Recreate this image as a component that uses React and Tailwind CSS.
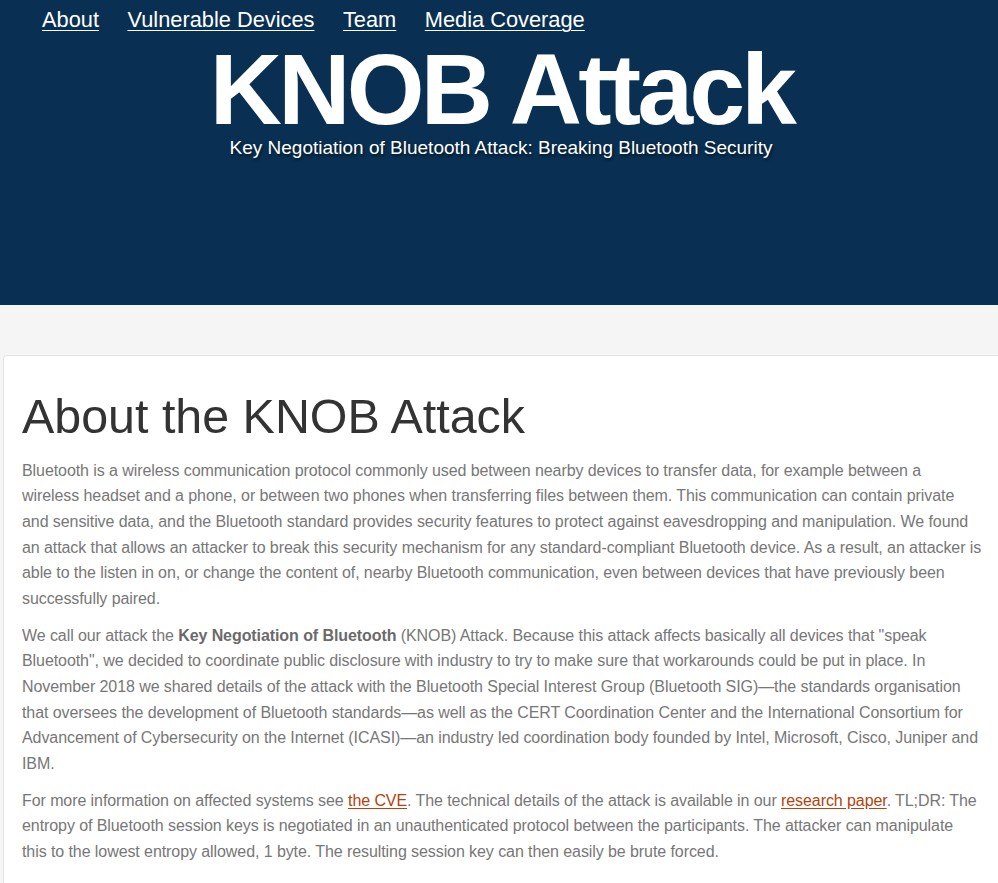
const link = "text-[#b5420c] underline underline-offset-[2px]";

export default function App() {
  return (
    <div className="min-h-screen bg-[#f5f5f5] overflow-hidden font-['Liberation_Sans',Arial,sans-serif]">
      <header className="h-[305px] bg-[#093052] text-white">
        <nav className="flex gap-[28.5px] pl-[42px] pt-[7px] text-[21.8px] leading-[26px]">
          <a href="#about" className="underline underline-offset-[3px] decoration-1">About</a>
          <a href="#devices" className="underline underline-offset-[3px] decoration-1">Vulnerable Devices</a>
          <a href="#team" className="underline underline-offset-[3px] decoration-1">Team</a>
          <a href="#media" className="underline underline-offset-[3px] decoration-1">Media Coverage</a>
        </nav>
        <div className="mt-[11px] text-center">
          <h1 className="pl-[5px] text-[100px] leading-[90px] font-bold tracking-[-3.7px]">KNOB Attack</h1>
          <p className="mt-[2px] pl-[4px] text-[19px] leading-[23px] [text-shadow:1px_2px_3px_rgba(0,0,0,0.6)]">
            Key Negotiation of Bluetooth Attack: Breaking Bluetooth Security
          </p>
        </div>
      </header>
      <div className="h-[50px]" />
      <main className="ml-[3px] w-[1010px] rounded-[4px] border border-[#e3e3e3] bg-white pl-[18px] pt-[34px] pb-[20px]">
        <div className="w-[975px]">
          <h2 className="text-[48.4px] leading-[52.8px] text-[#333]">About the KNOB Attack</h2>
          <div className="mt-[15px] text-[16px] leading-[25.6px] tracking-[-0.08px] text-[#777]">
            <p className="mb-[11.4px]">
              Bluetooth is a wireless communication protocol commonly used between nearby devices to transfer data, for example between a<br />
              wireless headset and a phone, or between two phones when transferring files between them. This communication can contain private<br />
              and sensitive data, and the Bluetooth standard provides security features to protect against eavesdropping and manipulation. We found<br />
              an attack that allows an attacker to break this security mechanism for any standard-compliant Bluetooth device. As a result, an attacker is<br />
              able to the listen in on, or change the content of, nearby Bluetooth communication, even between devices that have previously been<br />
              successfully paired.
            </p>
            <p className="mb-[11.4px]">
              We call our attack the <strong className="font-bold text-[#6a6a6a]">Key Negotiation of Bluetooth</strong> (KNOB) Attack. Because this attack affects basically all devices that "speak<br />
              Bluetooth", we decided to coordinate public disclosure with industry to try to make sure that workarounds could be put in place. In<br />
              November 2018 we shared details of the attack with the Bluetooth Special Interest Group (Bluetooth SIG)—the standards organisation<br />
              that oversees the development of Bluetooth standards—as well as the CERT Coordination Center and the International Consortium for<br />
              Advancement of Cybersecurity on the Internet (ICASI)—an industry led coordination body founded by Intel, Microsoft, Cisco, Juniper and<br />
              IBM.
            </p>
            <p className="mb-[11.4px]">
              For more information on affected systems see <a href="#cve" className={link}>the CVE</a>. The technical details of the attack is available in our <a href="#paper" className={link}>research paper</a>. TL;DR: The<br />
              entropy of Bluetooth session keys is negotiated in an unauthenticated protocol between the participants. The attacker can manipulate<br />
              this to the lowest entropy allowed, 1 byte. The resulting session key can then easily be brute forced.
            </p>
          </div>
        </div>
      </main>
    </div>
  );
}
